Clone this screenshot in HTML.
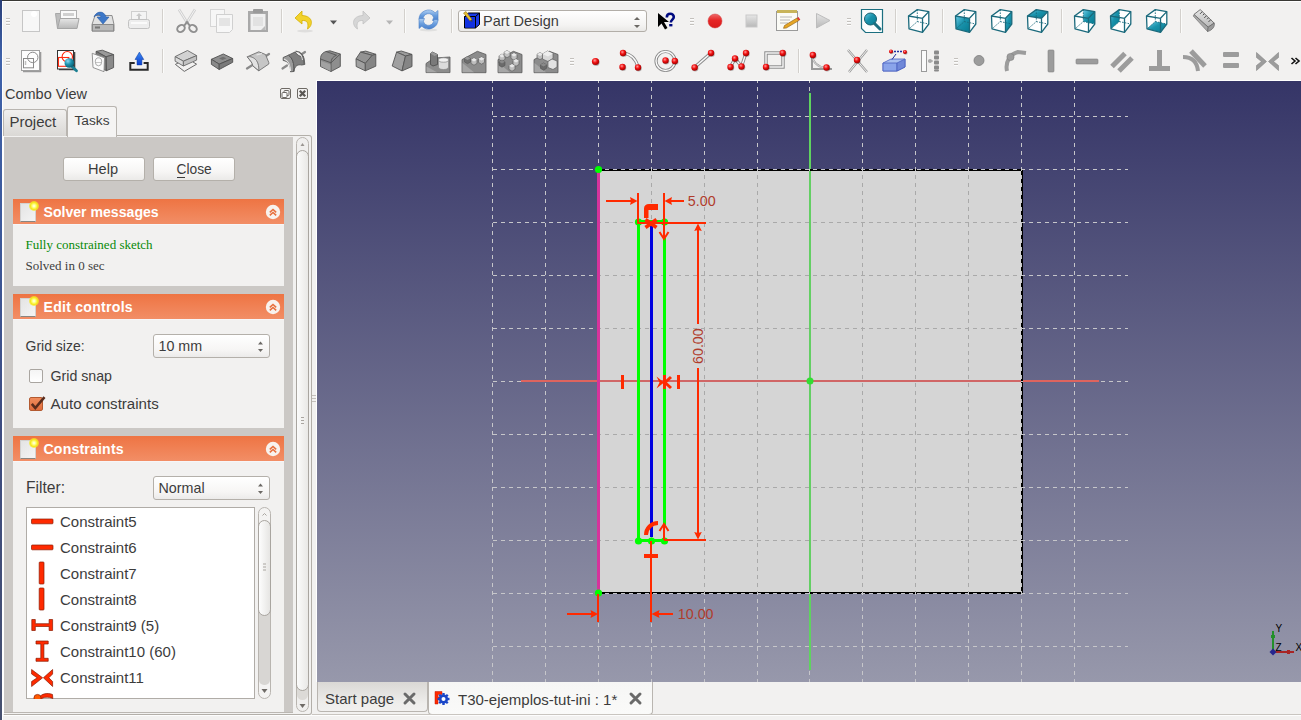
<!DOCTYPE html>
<html><head><meta charset="utf-8">
<style>
*{margin:0;padding:0;box-sizing:border-box}
html,body{width:1301px;height:720px;overflow:hidden;background:#f2f1f0;font-family:"Liberation Sans",sans-serif;color:#3c3c3c}
.a{position:absolute}
.t{position:absolute;white-space:nowrap;line-height:1}

</style></head><body>
<div class="a" style="left:0;top:0;width:1301px;height:1px;background:#3a3935"></div>
<div class="a" style="left:0;top:1px;width:1301px;height:1px;background:#ffffff"></div>
<div class="a" style="left:0;top:0;width:2px;height:720px;background:linear-gradient(#2a3f78,#3f62aa 8%,#3d5a9c 30%,#3e4c80 60%,#46506f)"></div>
<div class="a" style="left:2px;top:1px;width:1px;height:719px;background:#ffffff"></div>

<svg class="a" style="left:0;top:0" width="1301" height="81" viewBox="0 0 1301 81"><defs><linearGradient id="gG" x1="0" y1="0" x2="0" y2="1"><stop offset="0" stop-color="#d9d9d9"/><stop offset="1" stop-color="#9a9a9a"/></linearGradient><linearGradient id="gL" x1="0" y1="0" x2="0" y2="1"><stop offset="0" stop-color="#e6e6e6"/><stop offset="1" stop-color="#b8b8b8"/></linearGradient><linearGradient id="gT" x1="0" y1="0" x2="1" y2="1"><stop offset="0" stop-color="#6ccbe6"/><stop offset="0.45" stop-color="#1a93ac"/><stop offset="1" stop-color="#067a90"/></linearGradient><linearGradient id="gT2" x1="0" y1="0" x2="1" y2="1"><stop offset="0" stop-color="#6ccbe6"/><stop offset="0.5" stop-color="#1591aa"/><stop offset="1" stop-color="#0a7d92"/></linearGradient><radialGradient id="gR" cx="0.4" cy="0.35" r="0.65"><stop offset="0" stop-color="#ff9a9a"/><stop offset="0.5" stop-color="#f01010"/><stop offset="1" stop-color="#a00000"/></radialGradient><radialGradient id="gB" cx="0.4" cy="0.35" r="0.65"><stop offset="0" stop-color="#8ad0ff"/><stop offset="1" stop-color="#1a55c0"/></radialGradient></defs><path d="M6 18.5h4M6 21.5h4M6 24.5h4" stroke="#c4c1bd" stroke-width="1"/><path d="M6 19.5h4M6 22.5h4M6 25.5h4" stroke="#ffffff" stroke-width="1" opacity="0.8"/><rect x="22.5" y="10.5" width="17" height="21" fill="#f7f7f7" stroke="#c6c6c6"/><circle cx="34" cy="14" r="3" fill="#ffffff"/><path d="M55.5 13.5h5v15h-3z" fill="#bdbdbd" stroke="#a8a8a8"/><rect x="60.5" y="10.5" width="16" height="12" fill="#fafafa" stroke="#b0b0b0"/><rect x="63" y="13" width="11" height="3" fill="#d0d0d0"/><path d="M60 18.5h19l-2 10H57.5z" fill="url(#gL)" stroke="#a6a6a6"/><path d="M95 15.5h17l2 9v6.5H92v-6.5z" fill="#e2e2e2" stroke="#8e8e8e"/><rect x="92.5" y="24.5" width="21" height="6.5" fill="#b9b9b9" stroke="#8a8a8a"/><rect x="95" y="26.5" width="5" height="2" fill="#777"/><path d="M94 17C96 11 104 10 106 17L109 17L103 24L97 17L101 17C100 14 97 14 94 17Z" fill="#3d78c8" stroke="#2a5ca8" stroke-width="0.6"/><rect x="131.5" y="11.5" width="15" height="8" fill="#f4f4f4" stroke="#cfcfcf"/><path d="M139 13l3 3h-2v3h-2v-3h-2z" fill="#c9c9c9"/><rect x="128.5" y="19.5" width="21" height="9" rx="2" fill="#ededed" stroke="#c2c2c2"/><rect x="131" y="22" width="16" height="2" fill="#fafafa"/><rect x="162" y="9" width="1" height="24" fill="#d3d0cc"/><rect x="163" y="9" width="1" height="24" fill="#fbfbfa"/><path d="M179 9.5L188 24M195 9.5L186 24" stroke="#cfcfcf" stroke-width="2.6" fill="none"/><path d="M179 9.5L188 24M195 9.5L186 24" stroke="#f4f4f4" stroke-width="1" fill="none"/><ellipse cx="181" cy="28.5" rx="4" ry="3.2" fill="none" stroke="#8f8f8f" stroke-width="2" transform="rotate(-35 181 28.5)"/><ellipse cx="193" cy="28.5" rx="4" ry="3.2" fill="none" stroke="#8f8f8f" stroke-width="2" transform="rotate(35 193 28.5)"/><path d="M184 26L187 22L190 26" stroke="#8f8f8f" stroke-width="2" fill="none"/><rect x="210.5" y="9.5" width="14" height="17" fill="#f6f6f6" stroke="#d6d6d6"/><path d="M216.5 14.5h16v15l-3 3h-13z" fill="#f7f7f7" stroke="#d0d0d0"/><rect x="219" y="18" width="11" height="8" fill="#e4e4e4"/><rect x="248" y="11" width="20" height="21" fill="#a9a9a9"/><rect x="250.5" y="14" width="15" height="16" fill="#f0f0f0"/><rect x="253" y="9" width="10" height="4" rx="1" fill="#9a9a9a"/><rect x="253" y="17" width="10" height="9" fill="#e2e2e2"/><path d="M261 30l4-4v4z" fill="#bbb"/><rect x="281" y="9" width="1" height="24" fill="#d3d0cc"/><rect x="282" y="9" width="1" height="24" fill="#fbfbfa"/><path d="M302 11L295 18L302 24V20.5C307 20 309 23 307.5 29C313 26 314 16 302 15.5Z" fill="#f2d22c" stroke="#d4b000" stroke-width="0.8"/><ellipse cx="305" cy="31" rx="8" ry="1.5" fill="#000" opacity="0.08"/><path d="M330 20.5h7l-3.5 4z" fill="#555"/><path d="M363 11L370 18L363 24V20.5C358 20 356 23 357.5 29C352 26 351 16 363 15.5Z" fill="#d6d6d6" stroke="#c2c2c2" stroke-width="0.8"/><path d="M386 20.5h7l-3.5 4z" fill="#b5b5b5"/><rect x="404" y="9" width="1" height="24" fill="#d3d0cc"/><rect x="405" y="9" width="1" height="24" fill="#fbfbfa"/><defs><linearGradient id="gRf" x1="0" y1="0" x2="0" y2="1"><stop offset="0" stop-color="#b0cff2"/><stop offset="0.5" stop-color="#6a9ede"/><stop offset="1" stop-color="#4a80cc"/></linearGradient></defs><ellipse cx="428.5" cy="30" rx="9" ry="1.5" fill="#000" opacity="0.07"/><path d="M419 19.5A9.5 9.5 0 0 1 435.2 12.8L438 10.5V20.5H432.5L433.6 17.6A5.3 5.3 0 0 0 423.2 19.5Z" fill="url(#gRf)" stroke="#4a7fc8" stroke-width="0.6" stroke-linejoin="round"/><path d="M438 19.5A9.5 9.5 0 0 1 421.8 26.2L419 28.5V18.5H424.5L423.4 21.4A5.3 5.3 0 0 0 433.8 19.5Z" fill="url(#gRf)" stroke="#4a7fc8" stroke-width="0.6" stroke-linejoin="round"/><rect x="451" y="9" width="1" height="24" fill="#d3d0cc"/><rect x="452" y="9" width="1" height="24" fill="#fbfbfa"/><path d="M658 13L658 27L661.5 23.5L665 29.5L667.5 28L664 22H669Z" fill="#000"/><path d="M666.8 17.5C666.8 15 668.5 13.8 670.3 13.8C672.3 13.8 673.8 15.2 673.8 17C673.8 19.5 670.8 19.8 670.8 22.5" fill="none" stroke="#000a80" stroke-width="2.6"/><rect x="669.2" y="24" width="3.2" height="2.4" fill="#000a80"/><path d="M690 18.5h4M690 21.5h4M690 24.5h4" stroke="#c4c1bd" stroke-width="1"/><path d="M690 19.5h4M690 22.5h4M690 25.5h4" stroke="#ffffff" stroke-width="1" opacity="0.8"/><defs><linearGradient id="gRec" x1="0" y1="0" x2="0" y2="1"><stop offset="0" stop-color="#ee6a6a"/><stop offset="0.45" stop-color="#e62626"/><stop offset="1" stop-color="#d81a1a"/></linearGradient></defs><circle cx="715" cy="21" r="7" fill="url(#gRec)" stroke="#d04040" stroke-width="0.5"/><rect x="746" y="15" width="11" height="12" fill="url(#gL)" stroke="#c9c9c9"/><rect x="776.5" y="11.5" width="21" height="19" fill="#fbfbf6" stroke="#9a9a9a"/><rect x="777" y="10" width="20" height="3" fill="#c8b45a"/><path d="M780 17h12M780 20h10M780 23h8" stroke="#b8b8b8"/><path d="M784.5 25.5L797 18L798.8 20.6L786.3 28L783.5 28.3Z" fill="#e6a624" stroke="#8a5a10" stroke-width="0.6"/><path d="M797 18l1.8 2.6 1.5-0.9-1.8-2.6z" fill="#e03030"/><path d="M816.5 13.5L830 20.5L816.5 28Z" fill="url(#gL)" stroke="#bdbdbd"/><path d="M847 18.5h4M847 21.5h4M847 24.5h4" stroke="#c4c1bd" stroke-width="1"/><path d="M847 19.5h4M847 22.5h4M847 25.5h4" stroke="#ffffff" stroke-width="1" opacity="0.8"/><path d="M861.5 9.5h21v23h-17l-4-4z" fill="#fbfdfd" stroke="#1c6f80" stroke-width="1.2"/><circle cx="870.5" cy="19" r="6" fill="url(#gT)" stroke="#155e6e"/><path d="M874.5 23.5L880 29" stroke="#1c6f80" stroke-width="3" stroke-linecap="round"/><rect x="895" y="9" width="1" height="24" fill="#d3d0cc"/><rect x="896" y="9" width="1" height="24" fill="#fbfbfa"/><polygon points="908.5,16 917.3,9.6 928.8,11.6 928.8,24 922.5,32.3 909,28.8" fill="#ffffff"/><path d="M917.3 9.6V21.6L909 28.8M917.3 21.6L928.8 24" stroke="#1b6a7c" stroke-width="0.9" stroke-dasharray="1.6 1.2" fill="none"/><polygon points="908.5,16 917.3,9.6 928.8,11.6 928.8,24 922.5,32.3 909,28.8" fill="none" stroke="#1b6a7c" stroke-width="1.3" stroke-linejoin="round"/><path d="M908.5 16L922.5 18.3L928.8 11.6M922.5 18.3L922.5 32.3" stroke="#1b6a7c" stroke-width="1.3" fill="none"/><rect x="942" y="9" width="1" height="24" fill="#d3d0cc"/><rect x="943" y="9" width="1" height="24" fill="#fbfbfa"/><polygon points="955.5,16 964.3,9.6 975.8,11.6 975.8,24 969.5,32.3 956,28.8" fill="#ffffff"/><polygon points="955.5,16 969.5,18.3 969.5,32.3 956,28.8" fill="url(#gT)"/><path d="M964.3 9.6V21.6L956 28.8M964.3 21.6L975.8 24" stroke="#1b6a7c" stroke-width="0.9" stroke-dasharray="1.6 1.2" fill="none"/><polygon points="955.5,16 964.3,9.6 975.8,11.6 975.8,24 969.5,32.3 956,28.8" fill="none" stroke="#1b6a7c" stroke-width="1.3" stroke-linejoin="round"/><path d="M955.5 16L969.5 18.3L975.8 11.6M969.5 18.3L969.5 32.3" stroke="#1b6a7c" stroke-width="1.3" fill="none"/><polygon points="991.5,16 1000.3,9.6 1011.8,11.6 1011.8,24 1005.5,32.3 992,28.8" fill="#ffffff"/><polygon points="1005.5,18.3 1011.8,11.6 1011.8,24 1005.5,32.3" fill="url(#gT)"/><path d="M1000.3 9.6V21.6L992 28.8M1000.3 21.6L1011.8 24" stroke="#1b6a7c" stroke-width="0.9" stroke-dasharray="1.6 1.2" fill="none"/><polygon points="991.5,16 1000.3,9.6 1011.8,11.6 1011.8,24 1005.5,32.3 992,28.8" fill="none" stroke="#1b6a7c" stroke-width="1.3" stroke-linejoin="round"/><path d="M991.5 16L1005.5 18.3L1011.8 11.6M1005.5 18.3L1005.5 32.3" stroke="#1b6a7c" stroke-width="1.3" fill="none"/><polygon points="1027.5,16 1036.3,9.6 1047.8,11.6 1047.8,24 1041.5,32.3 1028,28.8" fill="#ffffff"/><polygon points="1027.5,16 1036.3,9.6 1047.8,11.6 1041.5,18.3" fill="url(#gT)"/><path d="M1036.3 9.6V21.6L1028 28.8M1036.3 21.6L1047.8 24" stroke="#1b6a7c" stroke-width="0.9" stroke-dasharray="1.6 1.2" fill="none"/><polygon points="1027.5,16 1036.3,9.6 1047.8,11.6 1047.8,24 1041.5,32.3 1028,28.8" fill="none" stroke="#1b6a7c" stroke-width="1.3" stroke-linejoin="round"/><path d="M1027.5 16L1041.5 18.3L1047.8 11.6M1041.5 18.3L1041.5 32.3" stroke="#1b6a7c" stroke-width="1.3" fill="none"/><rect x="1061" y="9" width="1" height="24" fill="#d3d0cc"/><rect x="1062" y="9" width="1" height="24" fill="#fbfbfa"/><polygon points="1074.5,16 1083.3,9.6 1094.8,11.6 1094.8,24 1088.5,32.3 1075,28.8" fill="#ffffff"/><polygon points="1083.3,9.6 1094.8,11.6 1094.8,24 1083.3,21.6" fill="url(#gT)"/><path d="M1083.3 9.6V21.6L1075 28.8M1083.3 21.6L1094.8 24" stroke="#1b6a7c" stroke-width="0.9" stroke-dasharray="1.6 1.2" fill="none"/><polygon points="1074.5,16 1083.3,9.6 1094.8,11.6 1094.8,24 1088.5,32.3 1075,28.8" fill="none" stroke="#1b6a7c" stroke-width="1.3" stroke-linejoin="round"/><path d="M1074.5 16L1088.5 18.3L1094.8 11.6M1088.5 18.3L1088.5 32.3" stroke="#1b6a7c" stroke-width="1.3" fill="none"/><polygon points="1110.5,16 1119.3,9.6 1130.8,11.6 1130.8,24 1124.5,32.3 1111,28.8" fill="#ffffff"/><polygon points="1110.5,16 1119.3,9.6 1119.3,21.6 1111,28.8" fill="url(#gT)"/><path d="M1119.3 9.6V21.6L1111 28.8M1119.3 21.6L1130.8 24" stroke="#1b6a7c" stroke-width="0.9" stroke-dasharray="1.6 1.2" fill="none"/><polygon points="1110.5,16 1119.3,9.6 1130.8,11.6 1130.8,24 1124.5,32.3 1111,28.8" fill="none" stroke="#1b6a7c" stroke-width="1.3" stroke-linejoin="round"/><path d="M1110.5 16L1124.5 18.3L1130.8 11.6M1124.5 18.3L1124.5 32.3" stroke="#1b6a7c" stroke-width="1.3" fill="none"/><polygon points="1146.5,16 1155.3,9.6 1166.8,11.6 1166.8,24 1160.5,32.3 1147,28.8" fill="#ffffff"/><polygon points="1147,28.8 1155.3,21.6 1166.8,24 1160.5,32.3" fill="url(#gT)"/><path d="M1155.3 9.6V21.6L1147 28.8M1155.3 21.6L1166.8 24" stroke="#1b6a7c" stroke-width="0.9" stroke-dasharray="1.6 1.2" fill="none"/><polygon points="1146.5,16 1155.3,9.6 1166.8,11.6 1166.8,24 1160.5,32.3 1147,28.8" fill="none" stroke="#1b6a7c" stroke-width="1.3" stroke-linejoin="round"/><path d="M1146.5 16L1160.5 18.3L1166.8 11.6M1160.5 18.3L1160.5 32.3" stroke="#1b6a7c" stroke-width="1.3" fill="none"/><rect x="1180" y="9" width="1" height="24" fill="#d3d0cc"/><rect x="1181" y="9" width="1" height="24" fill="#fbfbfa"/><path d="M1193.2 16L1194 14.4L1208.2 27.1L1207.5 31.5Z" fill="#a8a8a8" stroke="#7a7a7a" stroke-width="0.7"/><path d="M1194 14.4L1200.2 9.6L1214.2 23.1L1208.2 27.1Z" fill="url(#gL)" stroke="#6a6a6a" stroke-width="0.9" stroke-linejoin="round"/><path d="M1208.2 27.1L1214.2 23.1C1215 26 1213 30 1207.5 31.5Z" fill="#9a9a9a" stroke="#6a6a6a" stroke-width="0.8"/><path d="M1202.30 11.62l-2.26 2.26M1204.40 13.65l-1.56 1.56M1206.50 15.68l-2.26 2.26M1208.60 17.70l-1.56 1.56M1210.70 19.73l-2.26 2.26" stroke="#505050" stroke-width="1"/><path d="M6 58.5h4M6 61.5h4M6 64.5h4" stroke="#c4c1bd" stroke-width="1"/><path d="M6 59.5h4M6 62.5h4M6 65.5h4" stroke="#ffffff" stroke-width="1" opacity="0.8"/><path d="M23 71.5H40.5V52" fill="none" stroke="#9a9a9a" stroke-width="1.6"/><rect x="21.5" y="50.5" width="18" height="20" fill="#fdfdfd" stroke="#a0a0a0" stroke-width="1"/><circle cx="32.75" cy="57.4" r="5.2" fill="none" stroke="#8a8a8a" stroke-width="1"/><rect x="23.5" y="58.5" width="10" height="9.3" fill="none" stroke="#8a8a8a" stroke-width="1"/><path d="M25.5 61v4" stroke="#c0c0c0" stroke-width="1.5"/><path d="M59 69.5H74.5V52" fill="none" stroke="#444" stroke-width="1.6"/><rect x="57.5" y="50.5" width="16" height="18.5" fill="#ffffff" stroke="#333" stroke-width="1"/><circle cx="67.3" cy="56.7" r="5.2" fill="none" stroke="#ff2a10" stroke-width="1.1"/><rect x="58.5" y="57.5" width="10.3" height="8.8" fill="none" stroke="#ff2a10" stroke-width="1.1"/><defs><radialGradient id="gMg" cx="0.35" cy="0.3" r="0.7"><stop offset="0" stop-color="#8fd8f0"/><stop offset="0.5" stop-color="#1f94b0"/><stop offset="1" stop-color="#0b6478"/></radialGradient></defs><path d="M72 66.5L76.5 70.8" stroke="#1a7f92" stroke-width="2.8" stroke-linecap="round"/><circle cx="69.3" cy="63" r="4.8" fill="url(#gMg)"/><polygon points="96.1,51.4 102.3,50.2 113.6,54.6 106,56.8" fill="#9a9a9a" stroke="#555" stroke-width="0.9" stroke-linejoin="round"/><polygon points="106,56.8 113.6,54.6 113.6,67.6 106.5,70.7" fill="#8a8a8a" stroke="#555" stroke-width="0.9" stroke-linejoin="round"/><polygon points="96.1,51.4 106,56.8 106.5,70.7 96,66" fill="#7a7a7a" stroke="#555" stroke-width="0.9"/><polygon points="92.2,53.3 104.5,57.8 104,71.7 93,67.5" fill="#fbfbfb" stroke="#8a8a8a" stroke-width="0.9" stroke-linejoin="round"/><ellipse cx="98.5" cy="61.8" rx="3.2" ry="4" fill="none" stroke="#a0a0a0" stroke-width="0.9"/><path d="M95 62.5h7" stroke="#b0b0b0" stroke-width="0.7"/><path d="M134.7 63H130.3V69.8H147.7V63H143.6" fill="none" stroke="#2a2a2a" stroke-width="2"/><defs><linearGradient id="gBl" x1="0" y1="0" x2="0" y2="1"><stop offset="0" stop-color="#3f8af0"/><stop offset="1" stop-color="#0a3fd0"/></linearGradient></defs><path d="M139.4 52.1L143.8 59.5H141.9V64.9H137V59.5H135Z" fill="url(#gBl)" stroke="#0a3aa0" stroke-width="0.5" stroke-linejoin="round"/><rect x="162" y="49" width="1" height="24" fill="#d3d0cc"/><rect x="163" y="49" width="1" height="24" fill="#fbfbfa"/><path d="M175.4 64.4L184.3 71.4L196.6 64.2" fill="none" stroke="#6a6a6a" stroke-width="1"/><path d="M175.4 64.4L179 62.5M196.6 64.2L193 62" stroke="#6a6a6a" stroke-width="1"/><polygon points="175.1,56.6 187.5,50.5 196.6,55.6 183.4,61.2" fill="#d2d2d2" stroke="#6a6a6a" stroke-width="0.9" stroke-linejoin="round"/><polygon points="175.1,56.6 183.4,61.2 183.4,66 175.1,61.2" fill="#dadada" stroke="#6a6a6a" stroke-width="0.9" stroke-linejoin="round"/><polygon points="183.4,61.2 196.6,55.6 196.6,60.1 183.4,66" fill="#c2c2c2" stroke="#6a6a6a" stroke-width="0.9" stroke-linejoin="round"/><polygon points="211.4,59.3 223.3,54 232.7,58.5 219.2,64.2" fill="#8e8e8e" stroke="#505050" stroke-width="0.9" stroke-linejoin="round"/><path d="M219 58.5l4-1.8 3.5 1.6-4 1.8z" fill="#6e6e6e"/><polygon points="211.4,59.3 219.2,64.2 219.2,69.5 211.4,64.4" fill="#8a8a8a" stroke="#505050" stroke-width="0.9" stroke-linejoin="round"/><polygon points="219.2,64.2 232.7,58.5 232.7,62.3 219.2,69.5" fill="#7a7a7a" stroke="#505050" stroke-width="0.9" stroke-linejoin="round"/><path d="M247 68.5L252.5 65M263.5 57.5L269 54" stroke="#8a8a8a" stroke-width="2.2" stroke-linecap="round"/><path d="M247.3 56.8L258.8 51.8L265.5 54.5L268.8 62.5V64L258.8 70.8L252.8 65.8C252.5 62.5 250 60.5 247.3 56.8Z" fill="#c6c6c6" stroke="#6f6f6f" stroke-width="0.9" stroke-linejoin="round"/><path d="M247.3 56.8C250.5 56 254 57.5 256.5 60.5C258.5 63.5 259 67 258.8 70.8L252.8 65.8C252.5 62.5 250 60.5 247.3 56.8Z" fill="#e2e2e2" stroke="#6f6f6f" stroke-width="0.9" stroke-linejoin="round"/><path d="M256.5 55L262 53.5" stroke="#e8e8e8" stroke-width="1.2"/><path d="M282.5 68.5L287 65.5M302 54L305 52" stroke="#8a8a8a" stroke-width="2.2" stroke-linecap="round"/><path d="M283.2 57.5L288.5 55.2C292.5 58 294.5 63.5 293.8 71.5L290.5 71.8C291 66.5 288.5 61 283.2 60.5Z" fill="#9a9a9a" stroke="#555" stroke-width="0.9" stroke-linejoin="round"/><path d="M284 59C288 60.5 290.5 65.5 290.5 71" fill="none" stroke="#e8e8e8" stroke-width="1.2"/><path d="M288.5 55.2L295 52C297.5 55.5 301 57 303.5 56.5L304.5 64.5L301.5 65C298 64 294.5 66 293.8 71.5C294.5 63.5 292.5 58 288.5 55.2Z" fill="#7e7e7e" stroke="#555" stroke-width="0.9" stroke-linejoin="round"/><path d="M295.5 51.5C300 51 304 55 304.5 64.5" fill="none" stroke="#666" stroke-width="1.6"/><path d="M296.5 52.5C300 53 302 56 302.5 60" fill="none" stroke="#e8e8e8" stroke-width="0.9"/><path d="M320.5 59C320.5 54.5 323 52.5 326 51.5L330 50.8L340.3 54V66.5L331 71.5L320.5 66.5Z" fill="#8e8e8e" stroke="#555" stroke-width="0.9" stroke-linejoin="round"/><path d="M320.5 59L331 62.8L340.3 54M331 62.8V71.5M326 51.5L336.5 55.2C333 56.5 331 59 331 62.8" fill="none" stroke="#555" stroke-width="0.9"/><path d="M321 61L330.5 64.5V71L321 66.3Z" fill="#a2a2a2"/><polygon points="360.5,52.1 365.7,51.1 375.8,54.3 372.2,55.3" fill="#9c9c9c" stroke="#555" stroke-width="0.9" stroke-linejoin="round"/><polygon points="360.5,52.1 372.2,55.3 365.3,63.4 356,58.9" fill="#939393" stroke="#555" stroke-width="0.9" stroke-linejoin="round"/><polygon points="356,58.9 365.3,63.4 365.3,70.8 356.2,66.5" fill="#a0a0a0" stroke="#555" stroke-width="0.9" stroke-linejoin="round"/><polygon points="365.3,63.4 372.2,55.3 375.8,54.3 375.8,66.2 365.3,70.8" fill="#858585" stroke="#555" stroke-width="0.9" stroke-linejoin="round"/><polygon points="396.6,52.1 401.3,51 412,54.4 405.5,56" fill="#9c9c9c" stroke="#555" stroke-width="0.9" stroke-linejoin="round"/><polygon points="396.6,52.1 405.5,56 402,70.9 392.2,66" fill="#a0a0a0" stroke="#555" stroke-width="0.9" stroke-linejoin="round"/><polygon points="405.5,56 412,54.4 412,66.5 402,70.9" fill="#858585" stroke="#555" stroke-width="0.9" stroke-linejoin="round"/><path d="M426 72.6V63.5L434 58L450 57V72.6Z" fill="#8c8c8c" stroke="#5a5a5a" stroke-width="0.8" stroke-linejoin="round"/><path d="M426.5 66.5L437 72.2H426.5Z" fill="#a6a6a6"/><path d="M430.5 53.5L432.5 52L437.5 54.5V64.5L433 66L430.5 64.5Z" fill="#7a7a7a" stroke="#4a4a4a" stroke-width="0.8" stroke-linejoin="round"/><path d="M432.5 52L437.5 54.5L434.5 56L430.5 53.5Z" fill="#9a9a9a"/><path d="M438.5 60V67C438.5 68.8 441 69.5 443.5 69.5S448.5 68.8 448.5 67V60Z" fill="#dcdcdc" stroke="#8a8a8a" stroke-width="0.7"/><ellipse cx="443.5" cy="60" rx="5" ry="2.2" fill="#f2f2f2" stroke="#8a8a8a" stroke-width="0.7"/><path d="M462 72.7V59.6L477.4 51.3L486 54.5V72.7Z" fill="#8c8c8c" stroke="#5a5a5a" stroke-width="0.8" stroke-linejoin="round"/><path d="M462.5 63L474 72.2H462.5Z" fill="#a6a6a6"/><path d="M464.5 58.3l3-1.8 3 1.8v3.6l-3 1.8-3-1.8z" fill="#6e6e6e" stroke="#555" stroke-width="0.6"/><path d="M464.5 58.3l3-1.8 3 1.8-3 1.8z" fill="#9a9a9a"/><path d="M471 59.8l3-1.8 3 1.8v3.6l-3 1.8-3-1.8z" fill="#bdbdbd" stroke="#555" stroke-width="0.6"/><path d="M471 59.8l3-1.8 3 1.8-3 1.8z" fill="#e8e8e8"/><path d="M478.5 58.8l3-1.8 3 1.8v3.6l-3 1.8-3-1.8z" fill="#bdbdbd" stroke="#555" stroke-width="0.6"/><path d="M478.5 58.8l3-1.8 3 1.8-3 1.8z" fill="#e8e8e8"/><path d="M498 72.7V59.6L513.4 51.3L522 54.5V72.7Z" fill="#8c8c8c" stroke="#5a5a5a" stroke-width="0.8" stroke-linejoin="round"/><path d="M498.5 63L510 72.2H498.5Z" fill="#a6a6a6"/><path d="M499 55.8l3-1.8 3 1.8v3.6l-3 1.8-3-1.8z" fill="#c0c0c0" stroke="#555" stroke-width="0.6"/><path d="M499 55.8l3-1.8 3 1.8-3 1.8z" fill="#e8e8e8"/><path d="M504 52.3l3-1.8 3 1.8v3.6l-3 1.8-3-1.8z" fill="#c0c0c0" stroke="#555" stroke-width="0.6"/><path d="M504 52.3l3-1.8 3 1.8-3 1.8z" fill="#e8e8e8"/><path d="M511 54.8l3-1.8 3 1.8v3.6l-3 1.8-3-1.8z" fill="#c0c0c0" stroke="#555" stroke-width="0.6"/><path d="M511 54.8l3-1.8 3 1.8-3 1.8z" fill="#e8e8e8"/><path d="M513 60.8l3-1.8 3 1.8v3.6l-3 1.8-3-1.8z" fill="#c0c0c0" stroke="#555" stroke-width="0.6"/><path d="M513 60.8l3-1.8 3 1.8-3 1.8z" fill="#e8e8e8"/><path d="M509 65.8l3-1.8 3 1.8v3.6l-3 1.8-3-1.8z" fill="#c0c0c0" stroke="#555" stroke-width="0.6"/><path d="M509 65.8l3-1.8 3 1.8-3 1.8z" fill="#e8e8e8"/><path d="M499 61.8l3-1.8 3 1.8v3.6l-3 1.8-3-1.8z" fill="#6a6a6a" stroke="#555" stroke-width="0.6"/><path d="M499 61.8l3-1.8 3 1.8-3 1.8z" fill="#8a8a8a"/><path d="M534 72.7V59.6L549.4 51.3L558 54.5V72.7Z" fill="#8c8c8c" stroke="#5a5a5a" stroke-width="0.8" stroke-linejoin="round"/><path d="M534.5 63L546 72.2H534.5Z" fill="#a6a6a6"/><path d="M537 54.3l3-1.8 3 1.8v3.6l-3 1.8-3-1.8z" fill="#bdbdbd" stroke="#555" stroke-width="0.6"/><path d="M537 54.3l3-1.8 3 1.8-3 1.8z" fill="#e8e8e8"/><path d="M540.5 64.8l3-1.8 3 1.8v3.6l-3 1.8-3-1.8z" fill="#6a6a6a" stroke="#555" stroke-width="0.6"/><path d="M540.5 64.8l3-1.8 3 1.8-3 1.8z" fill="#8a8a8a"/><path d="M542.5 54l5-3 5.5 2.5v5l-5 3-5.5-2.5z" fill="#d8d8d8" stroke="#555" stroke-width="0.6"/><path d="M542.5 54l5-3 5.5 2.5-5 3z" fill="#eeeeee"/><path d="M548 61.5l4-2.5 5 2v6l-4 2.5-5-2z" fill="#e2e2e2" stroke="#555" stroke-width="0.6"/><path d="M570 58.5h4M570 61.5h4M570 64.5h4" stroke="#c4c1bd" stroke-width="1"/><path d="M570 59.5h4M570 62.5h4M570 65.5h4" stroke="#ffffff" stroke-width="1" opacity="0.8"/><circle cx="596.1" cy="62.3" r="3.6" fill="#000" opacity="0.25"/><circle cx="595.5" cy="61.5" r="3.6" fill="url(#gR)"/><path d="M623 53C631 54 636 59 638 67" stroke="#8a8a8a" stroke-width="3.2" fill="none"/><path d="M623 53C631 54 636 59 638 67" stroke="#fafafa" stroke-width="1.4" fill="none"/><circle cx="623.6" cy="53.8" r="3.2" fill="#000" opacity="0.25"/><circle cx="623" cy="53" r="3.2" fill="url(#gR)"/><circle cx="623.1" cy="67.8" r="3.2" fill="#000" opacity="0.25"/><circle cx="622.5" cy="67" r="3.2" fill="url(#gR)"/><circle cx="638.6" cy="68.3" r="3.2" fill="#000" opacity="0.25"/><circle cx="638" cy="67.5" r="3.2" fill="url(#gR)"/><circle cx="665.5" cy="61" r="9.5" fill="none" stroke="#8a8a8a" stroke-width="3.2"/><circle cx="665.5" cy="61" r="9.5" fill="none" stroke="#fafafa" stroke-width="1.4"/><circle cx="666.1" cy="61.3" r="3.2" fill="#000" opacity="0.25"/><circle cx="665.5" cy="60.5" r="3.2" fill="url(#gR)"/><circle cx="675.4" cy="61.8" r="3.2" fill="#000" opacity="0.25"/><circle cx="674.8" cy="61" r="3.2" fill="url(#gR)"/><path d="M695 67L711 53" stroke="#8a8a8a" stroke-width="3.6" fill="none"/><path d="M695 67L711 53" stroke="#fafafa" stroke-width="1.6" fill="none"/><circle cx="695.2" cy="68.3" r="3.2" fill="#000" opacity="0.25"/><circle cx="694.6" cy="67.5" r="3.2" fill="url(#gR)"/><circle cx="711.6" cy="53.8" r="3.2" fill="#000" opacity="0.25"/><circle cx="711" cy="53" r="3.2" fill="url(#gR)"/><path d="M730.5 67L735 58.5L741.5 66.5L746 53" stroke="#8a8a8a" stroke-width="3.2" fill="none"/><path d="M730.5 67L735 58.5L741.5 66.5L746 53" stroke="#fafafa" stroke-width="1.4" fill="none"/><circle cx="731.1" cy="67.8" r="3.2" fill="#000" opacity="0.25"/><circle cx="730.5" cy="67" r="3.2" fill="url(#gR)"/><circle cx="735.6" cy="59.3" r="3.2" fill="#000" opacity="0.25"/><circle cx="735" cy="58.5" r="3.2" fill="url(#gR)"/><circle cx="742.1" cy="67.3" r="3.2" fill="#000" opacity="0.25"/><circle cx="741.5" cy="66.5" r="3.2" fill="url(#gR)"/><circle cx="746.6" cy="53.8" r="3.2" fill="#000" opacity="0.25"/><circle cx="746" cy="53" r="3.2" fill="url(#gR)"/><rect x="766" y="53" width="17" height="14" fill="none" stroke="#8a8a8a" stroke-width="3.4"/><rect x="766" y="53" width="17" height="14" fill="none" stroke="#fafafa" stroke-width="1.4"/><circle cx="766.6" cy="67.8" r="3.2" fill="#000" opacity="0.25"/><circle cx="766" cy="67" r="3.2" fill="url(#gR)"/><circle cx="783.3000000000001" cy="53.8" r="3.2" fill="#000" opacity="0.25"/><circle cx="782.7" cy="53" r="3.2" fill="url(#gR)"/><rect x="798" y="49" width="1" height="24" fill="#d3d0cc"/><rect x="799" y="49" width="1" height="24" fill="#fbfbfa"/><path d="M812 52V69H832M812 55C813 63 818 67 826 68" stroke="#9a9a9a" stroke-width="2" fill="none"/><path d="M812 55C813 63 818 67 826 68" stroke="#f4f4f4" stroke-width="0.8" fill="none"/><circle cx="813.4" cy="55.8" r="3.2" fill="#000" opacity="0.25"/><circle cx="812.8" cy="55" r="3.2" fill="url(#gR)"/><circle cx="827.1" cy="68.3" r="3.2" fill="#000" opacity="0.25"/><circle cx="826.5" cy="67.5" r="3.2" fill="url(#gR)"/><path d="M848 50L867 72M867 50L849 72" stroke="#9a9a9a" stroke-width="2.4" fill="none"/><path d="M848 50L867 72M867 50L849 72" stroke="#f8f8f8" stroke-width="0.9" fill="none"/><circle cx="857.6" cy="60.8" r="3.2" fill="#000" opacity="0.25"/><circle cx="857" cy="60" r="3.2" fill="url(#gR)"/><path d="M883 63l8-4h14v8l-8 4h-14z" fill="#a9c0f0" stroke="#4a60c0" stroke-width="0.8"/><path d="M883 63h14v8h-14z" fill="#8aa4ea" stroke="#4a60c0" stroke-width="0.8"/><path d="M897 63l8-4v8l-8 4z" fill="#7088d8" stroke="#4a60c0" stroke-width="0.8"/><path d="M892 59.5L896 54" stroke="#2030a0" stroke-width="1"/><path d="M891 51.5H905" stroke="#2030a0" stroke-width="1.6" stroke-dasharray="2 1"/><circle cx="891.6" cy="52.3" r="2" fill="#000" opacity="0.25"/><circle cx="891" cy="51.5" r="2" fill="url(#gR)"/><circle cx="905.6" cy="52.8" r="2" fill="#000" opacity="0.25"/><circle cx="905" cy="52" r="2" fill="url(#gR)"/><rect x="921.5" y="50.5" width="5" height="21" fill="#fafafa" stroke="#9a9a9a"/><path d="M928 61h5" stroke="#9a9a9a"/><circle cx="930" cy="61" r="2" fill="#aaa"/><rect x="934" y="50.5" width="5" height="4" rx="1" fill="#8a8a8a"/><rect x="934" y="55.5" width="5" height="4" rx="1" fill="#8a8a8a"/><rect x="934" y="60.5" width="5" height="4" rx="1" fill="#8a8a8a"/><rect x="934" y="65.5" width="5" height="4" rx="1" fill="#8a8a8a"/><rect x="934" y="69.5" width="5" height="2" rx="1" fill="#8a8a8a"/><path d="M954 58.5h4M954 61.5h4M954 64.5h4" stroke="#c4c1bd" stroke-width="1"/><path d="M954 59.5h4M954 62.5h4M954 65.5h4" stroke="#ffffff" stroke-width="1" opacity="0.8"/><circle cx="979" cy="60.5" r="5" fill="#9c9c9c" stroke="#7e7e7e" stroke-width="0.8"/><path d="M1007 71C1005 62 1010 54 1018 52L1026 53" stroke="#9c9c9c" stroke-width="4" fill="none"/><circle cx="1010.5" cy="57" r="3.6" fill="#9c9c9c" stroke="#7e7e7e" stroke-width="0.6"/><rect x="1048" y="50" width="6" height="22" rx="1" fill="#9c9c9c" stroke="#858585" stroke-width="0.6"/><rect x="1076" y="59" width="22" height="5" rx="1" fill="#9c9c9c" stroke="#858585" stroke-width="0.6"/><path d="M1112 66.5L1125 53.5M1119 71L1132 58" stroke="#9c9c9c" stroke-width="5" fill="none"/><rect x="1157" y="50" width="5" height="17" fill="#9c9c9c"/><rect x="1149" y="66" width="21" height="5" fill="#9c9c9c"/><path d="M1191 51L1205 66" stroke="#9c9c9c" stroke-width="5" fill="none"/><path d="M1183 57C1191 57 1197 61 1198 71" stroke="#9c9c9c" stroke-width="4" fill="none"/><rect x="1223" y="52" width="16" height="5" rx="1" fill="#9c9c9c"/><rect x="1223" y="63" width="16" height="5" rx="1" fill="#9c9c9c"/><path d="M1256.5 52.5L1266.5 61.5L1256.5 70.5V65.5L1261.5 61.5L1256.5 57.5Z M1278.5 52.5L1268.5 61.5L1278.5 70.5V65.5L1273.5 61.5L1278.5 57.5Z" fill="#9c9c9c" stroke="#858585" stroke-width="0.6"/><path d="M1291.5 58l3.5 3-3.5 3M1295.5 58l3.5 3-3.5 3" fill="none" stroke="#111" stroke-width="1.6"/></svg><div class="a" style="left:458px;top:10px;width:189px;height:22px;border:1px solid #b2aea8;border-radius:3px;background:linear-gradient(#ffffff,#f4f3f2 70%,#e9e8e6)"></div><svg class="a" style="left:462px;top:11px" width="20" height="20" viewBox="462 11 20 20"><path d="M464.5 16.5L468.5 13H479.5V24.5L475.5 28H464.5Z" fill="#1a3ae8" stroke="#000" stroke-width="1" stroke-linejoin="round"/><path d="M464.5 16.5H475.5L479.5 13M475.5 16.5V28" fill="none" stroke="#000" stroke-width="1"/><path d="M465.5 17.5h9v10h-9z" fill="#1030e0"/><path d="M463.5 13L466 11.5L472 19.5L470 21Z" fill="#e8c030" stroke="#806010" stroke-width="0.5"/><path d="M470 21L472 19.5L472.5 22Z" fill="#444"/></svg><div class="t" style="left:483px;top:13.6px;font-size:14.5px;color:#3c3c3c">Part Design</div><svg class="a" style="left:632px;top:14px" width="10" height="16"><path d="M2 6L5 3L8 6Z" fill="#6b6864"/><path d="M2 11L5 14L8 11Z" fill="#6b6864"/></svg>
<div class="t" style="left:5px;top:86.73px;font-size:14.5px;color:#3c3c3c;font-weight:400;font-family:'Liberation Sans';">Combo View</div>
<svg class="a" style="left:279px;top:87px" width="31" height="14" viewBox="0 0 31 14">
<rect x="1.5" y="1.5" width="10" height="10" rx="1.5" fill="none" stroke="#6e6a65" stroke-width="1"/>
<rect x="5" y="3.5" width="5" height="5" rx="1" fill="none" stroke="#6e6a65"/><rect x="3" y="5.5" width="5" height="5" rx="1" fill="#fbfbfb" stroke="#6e6a65"/>
<rect x="18.5" y="1.5" width="10" height="10" rx="1.5" fill="none" stroke="#6e6a65" stroke-width="1"/>
<path d="M20.8 3.8L26.2 9.2M26.2 3.8L20.8 9.2" stroke="#5a5753" stroke-width="2.3"/>
</svg>
<div class="a" style="left:3px;top:135px;width:309px;height:580px;border:1px solid #b3afa9;border-left-color:#ffffff;border-radius:0 3px 3px 0;background:#f2f1f0"></div>
<div class="a" style="left:3px;top:109px;width:64px;height:27px;border:1px solid #b9b5b0;border-bottom:none;border-radius:3px 3px 0 0;background:linear-gradient(#f1f0ef,#dad8d5)"></div>
<div class="a" style="left:67px;top:106px;width:50px;height:31px;border:1px solid #b9b5b0;border-bottom:none;border-radius:3px 3px 0 0;background:#f5f4f3"></div>
<div class="t" style="left:9.5px;top:114.00px;font-size:15px;color:#3c3c3c;font-weight:400;font-family:'Liberation Sans';">Project</div>
<div class="t" style="left:74.5px;top:113.90px;font-size:13.7px;color:#3c3c3c;font-weight:400;font-family:'Liberation Sans';">Tasks</div>
<div class="a" style="left:4px;top:137px;width:289px;height:576px;background:#cbc8c5;border-bottom:1px solid #bbb7b2"></div>
<div class="a" style="left:296px;top:137px;width:13px;height:575px;border:1px solid #b9b5b0;border-radius:7px;background:#f0efee"></div>
<div class="a" style="left:297px;top:680px;width:11px;height:20px;background:#dcdad7;border-radius:0 0 6px 6px"></div>
<div class="a" style="left:296px;top:150px;width:13px;height:541px;border:1px solid #a9a5a0;border-radius:7px;background:linear-gradient(90deg,#fbfbfb,#e9e8e6)"></div>
<svg class="a" style="left:296px;top:137px" width="13" height="575"><path d="M4.5 9L6.5 6L8.5 9Z" fill="#9a9692"/><path d="M3.5 567L6.5 571L9.5 567Z" fill="#6f6b67"/><path d="M5 280.5h3M5 283.5h3M5 286.5h3" stroke="#a9a5a0" stroke-width="1"/></svg>
<svg class="a" style="left:311px;top:393px" width="6" height="10"><path d="M1 2.5h4M1 5.5h4M1 8.5h4" stroke="#c4c0bb" stroke-width="1"/></svg>
<div class="a" style="left:63px;top:157px;width:82px;height:24px;border:1px solid #b4b0aa;border-radius:3px;background:linear-gradient(#ffffff,#f7f6f5 60%,#ebeae8)"></div>
<div class="t" style="left:88px;top:162.24px;font-size:14.6px;color:#3c3c3c;font-weight:400;font-family:'Liberation Sans';">Help</div>
<div class="a" style="left:153px;top:157px;width:82px;height:24px;border:1px solid #b4b0aa;border-radius:3px;background:linear-gradient(#ffffff,#f7f6f5 60%,#ebeae8)"></div>
<div class="t" style="left:176.5px;top:162.92px;font-size:13.8px;color:#3c3c3c;font-weight:400;font-family:'Liberation Sans';">Close</div>
<div class="a" style="left:177px;top:177px;width:8px;height:1px;background:#3c3c3c"></div>
<div class="a" style="left:13px;top:199px;width:271px;height:25px;background:linear-gradient(#ee7443,#f28e66)"></div>
<div class="a" style="left:20px;top:203px;width:16px;height:19px;border:1px solid #d4d2d0;border-bottom-color:#8a8580;background:linear-gradient(135deg,#e4e4e4,#f4f4f4)"></div>
<div class="a" style="left:29px;top:201px;width:10px;height:10px;border-radius:50%;background:radial-gradient(circle,#ffffff 0%,#ffff80 25%,#f6e820 50%,rgba(246,232,32,0) 100%)"></div>
<div class="t" style="left:43.5px;top:205.06px;font-size:14.1px;color:#ffffff;font-weight:700;font-family:'Liberation Sans';letter-spacing:0px">Solver messages</div>
<svg class="a" style="left:265px;top:204px" width="16" height="16" viewBox="0 0 16 16"><circle cx="8" cy="8" r="7.2" fill="#f8f2ee"/><path d="M4.8 8.3L8 5.5L11.2 8.3M4.8 11.3L8 8.5L11.2 11.3" fill="none" stroke="#e8703e" stroke-width="1.6"/></svg>
<div class="a" style="left:13px;top:224px;width:271px;height:62px;background:#f2f1f0;border-top:1px solid #f6f6f8"></div>
<div class="t" style="left:25.5px;top:237.50px;font-size:13px;color:#088a08;font-weight:400;font-family:'Liberation Serif';">Fully constrained sketch</div>
<div class="t" style="left:25.5px;top:258.70px;font-size:13px;color:#404040;font-weight:400;font-family:'Liberation Serif';">Solved in 0 sec</div>
<div class="a" style="left:13px;top:294px;width:271px;height:25px;background:linear-gradient(#ee7443,#f28e66)"></div>
<div class="a" style="left:20px;top:298px;width:16px;height:19px;border:1px solid #d4d2d0;border-bottom-color:#8a8580;background:linear-gradient(135deg,#e4e4e4,#f4f4f4)"></div>
<div class="a" style="left:29px;top:296px;width:10px;height:10px;border-radius:50%;background:radial-gradient(circle,#ffffff 0%,#ffff80 25%,#f6e820 50%,rgba(246,232,32,0) 100%)"></div>
<div class="t" style="left:43.5px;top:300.06px;font-size:14.1px;color:#ffffff;font-weight:700;font-family:'Liberation Sans';letter-spacing:0.25px">Edit controls</div>
<svg class="a" style="left:265px;top:299px" width="16" height="16" viewBox="0 0 16 16"><circle cx="8" cy="8" r="7.2" fill="#f8f2ee"/><path d="M4.8 8.3L8 5.5L11.2 8.3M4.8 11.3L8 8.5L11.2 11.3" fill="none" stroke="#e8703e" stroke-width="1.6"/></svg>
<div class="a" style="left:13px;top:319px;width:271px;height:109px;background:#f2f1f0;border-top:1px solid #f6f6f8"></div>
<div class="t" style="left:25.5px;top:339.45px;font-size:14px;color:#3c3c3c;font-weight:400;font-family:'Liberation Sans';">Grid size:</div>
<div class="a" style="left:153px;top:334px;width:117px;height:24px;border:1px solid #b4b0aa;border-radius:3px;background:linear-gradient(#ffffff,#f6f5f4 70%,#ecebea)"></div>
<div class="t" style="left:158.5px;top:339.40px;font-size:14.3px;color:#3c3c3c;font-weight:400;font-family:'Liberation Sans';">10 mm</div>
<svg class="a" style="left:256px;top:339px" width="10" height="15"><path d="M2 5.5L4.5 2.5L7 5.5Z" fill="#6b6864"/><path d="M2 10L4.5 13L7 10Z" fill="#6b6864"/></svg>
<div class="a" style="left:29px;top:369px;width:14px;height:14px;border:1px solid #a9a5a0;border-radius:2px;background:linear-gradient(#f4f4f4,#ffffff)"></div>
<div class="t" style="left:50.5px;top:369.48px;font-size:14.2px;color:#3c3c3c;font-weight:400;font-family:'Liberation Sans';">Grid snap</div>
<div class="a" style="left:29px;top:397px;width:14px;height:14px;border:1px solid #b35a30;border-radius:2px;background:linear-gradient(#f08c5c,#e06c3c)"></div>
<svg class="a" style="left:29px;top:395px" width="17" height="17"><path d="M2.8 8.8L6.3 13L15.5 2.2" fill="none" stroke="#5a2c1c" stroke-width="2.6"/></svg>
<div class="t" style="left:50.5px;top:396.22px;font-size:15.1px;color:#3c3c3c;font-weight:400;font-family:'Liberation Sans';">Auto constraints</div>
<div class="a" style="left:13px;top:436px;width:271px;height:25px;background:linear-gradient(#ee7443,#f28e66)"></div>
<div class="a" style="left:20px;top:440px;width:16px;height:19px;border:1px solid #d4d2d0;border-bottom-color:#8a8580;background:linear-gradient(135deg,#e4e4e4,#f4f4f4)"></div>
<div class="a" style="left:29px;top:438px;width:10px;height:10px;border-radius:50%;background:radial-gradient(circle,#ffffff 0%,#ffff80 25%,#f6e820 50%,rgba(246,232,32,0) 100%)"></div>
<div class="t" style="left:43.5px;top:442.06px;font-size:14.1px;color:#ffffff;font-weight:700;font-family:'Liberation Sans';letter-spacing:0.18px">Constraints</div>
<svg class="a" style="left:265px;top:441px" width="16" height="16" viewBox="0 0 16 16"><circle cx="8" cy="8" r="7.2" fill="#f8f2ee"/><path d="M4.8 8.3L8 5.5L11.2 8.3M4.8 11.3L8 8.5L11.2 11.3" fill="none" stroke="#e8703e" stroke-width="1.6"/></svg>
<div class="a" style="left:13px;top:461px;width:271px;height:251px;background:#f2f1f0;border-top:1px solid #f6f6f8"></div>
<div class="t" style="left:26px;top:480.19px;font-size:15.6px;color:#3c3c3c;font-weight:400;font-family:'Liberation Sans';">Filter:</div>
<div class="a" style="left:153px;top:476px;width:117px;height:24px;border:1px solid #b4b0aa;border-radius:3px;background:linear-gradient(#ffffff,#f6f5f4 70%,#ecebea)"></div>
<div class="t" style="left:158.5px;top:481.40px;font-size:14.3px;color:#3c3c3c;font-weight:400;font-family:'Liberation Sans';">Normal</div>
<svg class="a" style="left:256px;top:481px" width="10" height="15"><path d="M2 5.5L4.5 2.5L7 5.5Z" fill="#6b6864"/><path d="M2 10L4.5 13L7 10Z" fill="#6b6864"/></svg>
<div class="a" style="left:26px;top:507px;width:229px;height:192px;border:1px solid #b0aca7;background:#ffffff;overflow:hidden"></div>
<div class="a" style="left:258px;top:507px;width:13px;height:192px;border:1px solid #b9b5b0;border-radius:7px;background:#f4f3f2"></div>
<div class="a" style="left:259px;top:600px;width:11px;height:85px;background:#d8d6d3;border-radius:0 0 5px 5px"></div>
<div class="a" style="left:258px;top:520px;width:13px;height:96px;border:1px solid #a9a5a0;border-radius:7px;background:linear-gradient(90deg,#fdfdfd,#e6e5e3)"></div>
<svg class="a" style="left:258px;top:507px" width="13" height="192"><path d="M4.5 8.5L6.5 6.5L8.5 8.5" fill="none" stroke="#a9a5a0"/><path d="M5 57h3M5 60h3M5 63h3" stroke="#a9a5a0"/><path d="M3.5 182L6.5 186L9.5 182Z" fill="#6f6b67"/></svg>
<div class="t" style="left:60px;top:513.80px;font-size:15px;color:#3c3c3c;font-weight:400;font-family:'Liberation Sans';">Constraint5</div>
<div class="t" style="left:60px;top:539.80px;font-size:15px;color:#3c3c3c;font-weight:400;font-family:'Liberation Sans';">Constraint6</div>
<div class="t" style="left:60px;top:565.80px;font-size:15px;color:#3c3c3c;font-weight:400;font-family:'Liberation Sans';">Constraint7</div>
<div class="t" style="left:60px;top:591.80px;font-size:15px;color:#3c3c3c;font-weight:400;font-family:'Liberation Sans';">Constraint8</div>
<div class="t" style="left:60px;top:617.80px;font-size:15px;color:#3c3c3c;font-weight:400;font-family:'Liberation Sans';">Constraint9 (5)</div>
<div class="t" style="left:60px;top:643.80px;font-size:15px;color:#3c3c3c;font-weight:400;font-family:'Liberation Sans';">Constraint10 (60)</div>
<div class="t" style="left:60px;top:669.80px;font-size:15px;color:#3c3c3c;font-weight:400;font-family:'Liberation Sans';">Constraint11</div>
<svg class="a" style="left:26px;top:507px" width="229" height="192" viewBox="26 507 229 192"><g fill="#ff2a00" stroke="#8a1a00" stroke-width="0.7"><rect x="31.5" y="519" width="21.5" height="4.8" rx="0.8"/><rect x="31.5" y="545" width="21.5" height="4.8" rx="0.8"/><rect x="39.2" y="562" width="4.8" height="22" rx="0.8"/><rect x="39.2" y="588" width="4.8" height="22" rx="0.8"/><path d="M31.8 619.5h3.5v4.2h13.8v-4.2h3.5v11h-3.5v-4H35.3v4h-3.5Z"/><path d="M36 641h12.2v3h-4.3v14.3h4.3v3H36v-3h4.8V644H36Z"/><path d="M31.6 669.5L42.6 677.8L31.6 686.5V681.5L37.2 677.8L31.6 674Z M52.6 669.5L43.4 677.8L52.6 686.5V681.5L48.8 677.8L52.6 674Z"/><path d="M39 698C41 693.5 48 692.5 52.5 694.5L52.8 698.5C48.5 696.5 43 697 41.5 699Z"/><circle cx="37.5" cy="698" r="3.6" fill="#ff5a00"/></g></svg>
<div class="a" style="left:316px;top:80px;width:985px;height:602px;background:#ffffff"></div>
<div class="a" style="left:317px;top:81px;width:984px;height:601px;background:linear-gradient(#353567,#9798ab)"></div>
<svg class="a" style="left:317px;top:81px" width="984" height="601" viewBox="317 81 984 601" shape-rendering="crispEdges"><rect x="600" y="171" width="421" height="421" fill="#d5d5d5"/><rect x="598" y="169" width="425" height="2" fill="#000"/><rect x="1021" y="169" width="2" height="425" fill="#000"/><rect x="598" y="592" width="425" height="2" fill="#000"/><clipPath id="fo"><path d="M317 81H1301V682H317ZM600 171V592H1021V171Z" clip-rule="evenodd"/></clipPath><g clip-path="url(#fo)"><line x1="492.5" y1="79" x2="492.5" y2="682" stroke="#c6c6ca" stroke-width="1" stroke-dasharray="4 4"/><line x1="545.5" y1="79" x2="545.5" y2="682" stroke="#c6c6ca" stroke-width="1" stroke-dasharray="4 4"/><line x1="598.5" y1="79" x2="598.5" y2="682" stroke="#c6c6ca" stroke-width="1" stroke-dasharray="4 4"/><line x1="651.5" y1="79" x2="651.5" y2="682" stroke="#c6c6ca" stroke-width="1" stroke-dasharray="4 4"/><line x1="704.5" y1="79" x2="704.5" y2="682" stroke="#c6c6ca" stroke-width="1" stroke-dasharray="4 4"/><line x1="757.5" y1="79" x2="757.5" y2="682" stroke="#c6c6ca" stroke-width="1" stroke-dasharray="4 4"/><line x1="809.5" y1="79" x2="809.5" y2="682" stroke="#c6c6ca" stroke-width="1" stroke-dasharray="4 4"/><line x1="862.5" y1="79" x2="862.5" y2="682" stroke="#c6c6ca" stroke-width="1" stroke-dasharray="4 4"/><line x1="915.5" y1="79" x2="915.5" y2="682" stroke="#c6c6ca" stroke-width="1" stroke-dasharray="4 4"/><line x1="968.5" y1="79" x2="968.5" y2="682" stroke="#c6c6ca" stroke-width="1" stroke-dasharray="4 4"/><line x1="1021.5" y1="79" x2="1021.5" y2="682" stroke="#c6c6ca" stroke-width="1" stroke-dasharray="4 4"/><line x1="1074.5" y1="79" x2="1074.5" y2="682" stroke="#c6c6ca" stroke-width="1" stroke-dasharray="4 4"/><line x1="493" y1="116.5" x2="1128" y2="116.5" stroke="#c6c6ca" stroke-width="1" stroke-dasharray="4 4"/><line x1="493" y1="169.5" x2="1128" y2="169.5" stroke="#c6c6ca" stroke-width="1" stroke-dasharray="4 4"/><line x1="493" y1="222.5" x2="1128" y2="222.5" stroke="#c6c6ca" stroke-width="1" stroke-dasharray="4 4"/><line x1="493" y1="275.5" x2="1128" y2="275.5" stroke="#c6c6ca" stroke-width="1" stroke-dasharray="4 4"/><line x1="493" y1="328.5" x2="1128" y2="328.5" stroke="#c6c6ca" stroke-width="1" stroke-dasharray="4 4"/><line x1="493" y1="381.5" x2="1128" y2="381.5" stroke="#c6c6ca" stroke-width="1" stroke-dasharray="4 4"/><line x1="493" y1="434.5" x2="1128" y2="434.5" stroke="#c6c6ca" stroke-width="1" stroke-dasharray="4 4"/><line x1="493" y1="487.5" x2="1128" y2="487.5" stroke="#c6c6ca" stroke-width="1" stroke-dasharray="4 4"/><line x1="493" y1="540.5" x2="1128" y2="540.5" stroke="#c6c6ca" stroke-width="1" stroke-dasharray="4 4"/><line x1="493" y1="593.5" x2="1128" y2="593.5" stroke="#c6c6ca" stroke-width="1" stroke-dasharray="4 4"/><line x1="493" y1="646.5" x2="1128" y2="646.5" stroke="#c6c6ca" stroke-width="1" stroke-dasharray="4 4"/></g><clipPath id="fc"><rect x="600" y="171" width="421" height="421"/></clipPath><g clip-path="url(#fc)"><line x1="492.5" y1="79" x2="492.5" y2="682" stroke="#a9a9a9" stroke-width="1" stroke-dasharray="4 4"/><line x1="545.5" y1="79" x2="545.5" y2="682" stroke="#a9a9a9" stroke-width="1" stroke-dasharray="4 4"/><line x1="598.5" y1="79" x2="598.5" y2="682" stroke="#a9a9a9" stroke-width="1" stroke-dasharray="4 4"/><line x1="651.5" y1="79" x2="651.5" y2="682" stroke="#a9a9a9" stroke-width="1" stroke-dasharray="4 4"/><line x1="704.5" y1="79" x2="704.5" y2="682" stroke="#a9a9a9" stroke-width="1" stroke-dasharray="4 4"/><line x1="757.5" y1="79" x2="757.5" y2="682" stroke="#a9a9a9" stroke-width="1" stroke-dasharray="4 4"/><line x1="809.5" y1="79" x2="809.5" y2="682" stroke="#a9a9a9" stroke-width="1" stroke-dasharray="4 4"/><line x1="862.5" y1="79" x2="862.5" y2="682" stroke="#a9a9a9" stroke-width="1" stroke-dasharray="4 4"/><line x1="915.5" y1="79" x2="915.5" y2="682" stroke="#a9a9a9" stroke-width="1" stroke-dasharray="4 4"/><line x1="968.5" y1="79" x2="968.5" y2="682" stroke="#a9a9a9" stroke-width="1" stroke-dasharray="4 4"/><line x1="1021.5" y1="79" x2="1021.5" y2="682" stroke="#a9a9a9" stroke-width="1" stroke-dasharray="4 4"/><line x1="1074.5" y1="79" x2="1074.5" y2="682" stroke="#a9a9a9" stroke-width="1" stroke-dasharray="4 4"/><line x1="493" y1="116.5" x2="1128" y2="116.5" stroke="#a9a9a9" stroke-width="1" stroke-dasharray="4 4"/><line x1="493" y1="169.5" x2="1128" y2="169.5" stroke="#a9a9a9" stroke-width="1" stroke-dasharray="4 4"/><line x1="493" y1="222.5" x2="1128" y2="222.5" stroke="#a9a9a9" stroke-width="1" stroke-dasharray="4 4"/><line x1="493" y1="275.5" x2="1128" y2="275.5" stroke="#a9a9a9" stroke-width="1" stroke-dasharray="4 4"/><line x1="493" y1="328.5" x2="1128" y2="328.5" stroke="#a9a9a9" stroke-width="1" stroke-dasharray="4 4"/><line x1="493" y1="381.5" x2="1128" y2="381.5" stroke="#a9a9a9" stroke-width="1" stroke-dasharray="4 4"/><line x1="493" y1="434.5" x2="1128" y2="434.5" stroke="#a9a9a9" stroke-width="1" stroke-dasharray="4 4"/><line x1="493" y1="487.5" x2="1128" y2="487.5" stroke="#a9a9a9" stroke-width="1" stroke-dasharray="4 4"/><line x1="493" y1="540.5" x2="1128" y2="540.5" stroke="#a9a9a9" stroke-width="1" stroke-dasharray="4 4"/><line x1="493" y1="593.5" x2="1128" y2="593.5" stroke="#a9a9a9" stroke-width="1" stroke-dasharray="4 4"/><line x1="493" y1="646.5" x2="1128" y2="646.5" stroke="#a9a9a9" stroke-width="1" stroke-dasharray="4 4"/></g><g id="sk"><rect x="521" y="380" width="79" height="2" fill="#de645e"/><rect x="600" y="380" width="421" height="2" fill="#d06666"/><rect x="1023" y="380" width="76" height="2" fill="#de645e"/><rect x="809" y="93" width="2" height="76" fill="#5fd35f"/><rect x="809" y="171" width="2" height="421" fill="#63cf63"/><rect x="809" y="594" width="2" height="76" fill="#5fd35f"/><circle cx="810" cy="381" r="3.5" fill="#33dd33" shape-rendering="geometricPrecision"/><rect x="597" y="170" width="3" height="423" fill="#d6339c"/><rect x="637" y="222" width="3" height="319" fill="#00ff00"/><rect x="663" y="238" width="3" height="287" fill="#00ff00"/><rect x="637" y="220" width="29" height="3" fill="#00ff00"/><rect x="637" y="539" width="29" height="3" fill="#00ff00"/><rect x="650" y="226" width="3" height="311" fill="#0000e0"/><circle cx="598.5" cy="169.5" r="3.6" fill="#00ff00" shape-rendering="geometricPrecision"/><circle cx="598.5" cy="593" r="3.6" fill="#00ff00" shape-rendering="geometricPrecision"/><circle cx="638.5" cy="222" r="3.6" fill="#00ff00" shape-rendering="geometricPrecision"/><circle cx="664.5" cy="222" r="3.6" fill="#00ff00" shape-rendering="geometricPrecision"/><circle cx="638.5" cy="541" r="3.6" fill="#00ff00" shape-rendering="geometricPrecision"/><circle cx="651.5" cy="541" r="3.6" fill="#00ff00" shape-rendering="geometricPrecision"/><circle cx="664.5" cy="541" r="3.6" fill="#00ff00" shape-rendering="geometricPrecision"/><rect x="637" y="193" width="2" height="30" fill="#ff2a00"/><rect x="663" y="193" width="2" height="46" fill="#ff2a00"/><rect x="606" y="200" width="25" height="2" fill="#ff2a00"/><polygon points="630,197 637.5,201 630,205 631,201" fill="#ff2a00" shape-rendering="geometricPrecision"/><rect x="671" y="200" width="13" height="2" fill="#ff2a00"/><polygon points="672,197 664.5,201 672,205 671,201" fill="#ff2a00" shape-rendering="geometricPrecision"/><polyline points="659.5,232 664,239 668.5,232" fill="none" stroke="#ff2a00" stroke-width="2" shape-rendering="geometricPrecision"/><rect x="637" y="222" width="69" height="2" fill="#ff2a00"/><path d="M658 204H649C646 204 644 205.5 644 208.5V218H648.5V210H658Z" fill="#ff2a00" shape-rendering="geometricPrecision"/><path d="M645.5 219.5L656.5 227.5M656.5 219.5L645.5 227.5" stroke="#ff2a00" stroke-width="3.6" shape-rendering="geometricPrecision"/><rect x="697" y="230" width="2" height="94" fill="#ff2a00"/><polygon points="694.2,231 698,223.5 701.8,231 698,230" fill="#ff2a00" shape-rendering="geometricPrecision"/><rect x="697" y="368" width="2" height="165" fill="#ff2a00"/><polygon points="694.2,532 698,539.5 701.8,532 698,533" fill="#ff2a00" shape-rendering="geometricPrecision"/><rect x="664" y="539" width="42" height="2" fill="#ff2a00"/><rect x="663" y="524" width="2" height="16" fill="#ff2a00"/><polyline points="659.5,531 664,524 668.5,531" fill="none" stroke="#ff2a00" stroke-width="2" shape-rendering="geometricPrecision"/><path d="M646 535 A12 12 0 0 1 658 523" fill="none" stroke="#ff2a00" stroke-width="4" shape-rendering="geometricPrecision"/><rect x="597" y="594" width="2" height="28" fill="#ff2a00"/><rect x="650" y="541" width="2" height="81" fill="#ff2a00"/><rect x="644" y="554" width="14" height="4" fill="#ff2a00"/><rect x="567" y="613" width="25" height="2" fill="#ff2a00"/><polygon points="590.5,610 598,614 590.5,618 591.5,614" fill="#ff2a00" shape-rendering="geometricPrecision"/><rect x="658" y="613" width="15" height="2" fill="#ff2a00"/><polygon points="659.5,610 651.5,614 659.5,618 658.5,614" fill="#ff2a00" shape-rendering="geometricPrecision"/><rect x="621" y="375" width="3" height="14" fill="#ff2a00"/><rect x="677" y="375" width="3" height="14" fill="#ff2a00"/><polygon points="656.5,376.5 664,382.5 656.5,388.5 659.5,382.5" fill="#ff2a00" shape-rendering="geometricPrecision"/><rect x="663" y="375" width="3" height="14" fill="#ff2a00"/><path d="M665 382.5L671 377M665 382.5L671 388" stroke="#ff2a00" stroke-width="3" shape-rendering="geometricPrecision"/><g font-family="Liberation Sans" font-size="14.3" fill="#b03c2c" shape-rendering="geometricPrecision"><text x="687.8" y="205.8">5.00</text><text x="677.8" y="619">10.00</text><text transform="translate(703,364) rotate(-90)" x="0" y="0">60.00</text></g><g shape-rendering="geometricPrecision"><rect x="1272" y="631" width="2" height="21" fill="#23902a"/><rect x="1271" y="635" width="4" height="3" fill="#23902a"/><rect x="1273" y="651" width="21" height="2" fill="#a82424"/><rect x="1287" y="650" width="3" height="4" fill="#a82424"/><polygon points="1273,648.5 1276.5,652 1273,655.5 1269.5,652" fill="#25258f"/><g font-family="Liberation Sans" font-size="10" fill="#000"><text x="1275.5" y="632">Y</text><text x="1275.5" y="651">Z</text><text x="1295.5" y="651">X</text></g></g></g></svg>
<div class="a" style="left:317px;top:682px;width:111px;height:30px;background:linear-gradient(#dad8d5,#efeeec 75%,#f1f0ef);border:1px solid #b9b5b0;border-top:none;border-radius:0 0 4px 4px"></div>
<div class="t" style="left:325px;top:690.6px;font-size:15px;color:#3c3c3c">Start page</div>
<svg class="a" style="left:402px;top:691px" width="15" height="15"><path d="M3 3L12 12M12 3L3 12" stroke="#6a6a6a" stroke-width="3" stroke-linecap="round"/></svg>
<div class="a" style="left:428px;top:682px;width:225px;height:33px;background:linear-gradient(#f6f6f5,#fafaf9);border:1px solid #b9b5b0;border-top:none;border-radius:0 0 4px 4px"></div>
<svg class="a" style="left:433px;top:690px" width="18" height="16" viewBox="433 690 18 16">
<path d="M435 691.5h7v3h-4v2.5h3v2.5h-3v4.5h-3z" fill="#ff2a00" stroke="#c01800" stroke-width="0.5"/>
<g transform="translate(443.5 699)"><circle r="4.6" fill="#1b47c8"/>
<g fill="#1b47c8"><rect x="-1.2" y="-6" width="2.4" height="12"/><rect x="-1.2" y="-6" width="2.4" height="12" transform="rotate(45)"/><rect x="-1.2" y="-6" width="2.4" height="12" transform="rotate(90)"/><rect x="-1.2" y="-6" width="2.4" height="12" transform="rotate(135)"/></g>
<circle r="2" fill="#ffffff"/></g>
</svg>
<div class="t" style="left:458px;top:691.6px;font-size:15px;color:#3c3c3c">T30-ejemplos-tut-ini : 1*</div>
<svg class="a" style="left:628px;top:691px" width="15" height="15"><path d="M3 3L12 12M12 3L3 12" stroke="#6a6a6a" stroke-width="3" stroke-linecap="round"/></svg>
<div class="a" style="left:312px;top:714px;width:989px;height:1px;background:#c9c5c0"></div>
<div class="a" style="left:3px;top:715px;width:1298px;height:1px;background:#fdfdfd"></div>

</body></html>
